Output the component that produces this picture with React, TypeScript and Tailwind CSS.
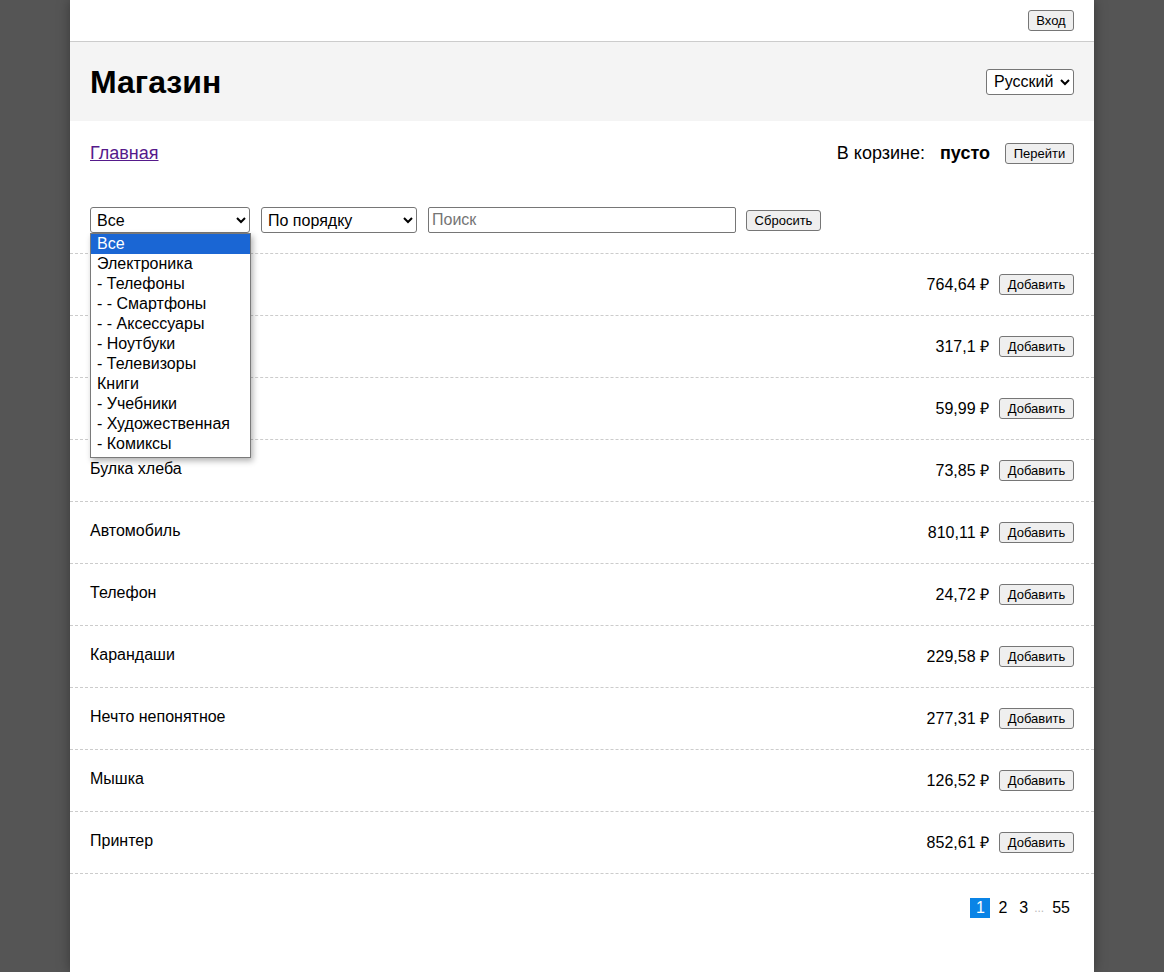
import React from "react";

const products: [string, string][] = [
  ["", "764,64 ₽"],
  ["", "317,1 ₽"],
  ["", "59,99 ₽"],
  ["Булка хлеба", "73,85 ₽"],
  ["Автомобиль", "810,11 ₽"],
  ["Телефон", "24,72 ₽"],
  ["Карандаши", "229,58 ₽"],
  ["Нечто непонятное", "277,31 ₽"],
  ["Мышка", "126,52 ₽"],
  ["Принтер", "852,61 ₽"],
];

const categories = [
  "Все",
  "Электроника",
  "- Телефоны",
  "- - Смартфоны",
  "- - Аксессуары",
  "- Ноутбуки",
  "- Телевизоры",
  "Книги",
  "- Учебники",
  "- Художественная",
  "- Комиксы",
];

function Btn({ children, className = "" }: { children: React.ReactNode; className?: string }) {
  return (
    <button
      className={
        "h-[21px] rounded-[3px] border border-[#767676] bg-[#efefef] px-[6px] text-[13px] leading-[19px] text-black " +
        className
      }
    >
      {children}
    </button>
  );
}

export default function App() {
  return (
    <div className="min-h-[972px] bg-[#555555] font-['Liberation_Sans',Arial,sans-serif] text-black">
      <div className="mx-auto min-h-[972px] w-[1024px] bg-white shadow-[0_0_12px_rgba(0,0,0,0.35)]">
        {/* top bar */}
        <div className="flex h-[42px] items-center justify-end border-b border-[#cccccc] px-5 pb-[1px]">
          <Btn className="w-[46px] px-0">Вход</Btn>
        </div>
        {/* header */}
        <div className="flex h-[79px] items-center justify-between bg-[#f4f4f4] px-5">
          <h1 className="text-[32px] font-bold leading-none">Магазин</h1>
          <select className="h-[26px] w-[88px] rounded-[3px] border border-[#767676] bg-white px-[3px] text-[16px]">
            <option>Русский</option>
          </select>
        </div>
        {/* content */}
        <div className="px-5 pt-[22px]">
          <div className="flex h-[21px] items-center justify-between">
            <a href="#" className="text-[18px] text-[#551a8b] underline">
              Главная
            </a>
            <div className="flex items-center">
              <span className="text-[18px]">В корзине:</span>
              <span className="ml-[15px] text-[18px] font-bold">пусто</span>
              <Btn className="ml-[15px] w-[69px] px-0">Перейти</Btn>
            </div>
          </div>

          <div className="relative mt-[43px] flex h-[26px] items-center">
            <select className="h-[26px] w-[160px] rounded-[3px] border border-[#767676] bg-white pl-[2px] text-[16px]">
              <option>Все</option>
            </select>
            <select className="ml-[11px] h-[26px] w-[156px] rounded-[3px] border border-[#767676] bg-white pl-[2px] text-[16px]">
              <option>По порядку</option>
            </select>
            <input
              placeholder="Поиск"
              className="ml-[11px] h-[26px] w-[308px] rounded-[2px] border border-[#767676] px-[3px] text-[16px] placeholder:text-[#757575]"
            />
            <Btn className="ml-[10px] w-[75px] px-0">Сбросить</Btn>

            {/* open dropdown */}
            <div className="absolute left-0 top-[26px] z-10 w-[161px] border border-[#7a7a7a] bg-white pb-[3px] shadow-[2px_3px_6px_rgba(0,0,0,0.3)]">
              {categories.map((c, i) => (
                <div
                  key={c}
                  className={
                    "h-[20px] whitespace-pre pl-[6px] text-[16px] leading-[20px] " +
                    (i === 0 ? "bg-[#1a66d4] text-white" : "text-black")
                  }
                >
                  {c}
                </div>
              ))}
            </div>
          </div>
        </div>

        <div className="mt-[20px] border-t border-dashed border-[#cccccc]">
          {products.map(([name, price], i) => (
            <div
              key={i}
              className="flex h-[62px] items-center justify-between border-b border-dashed border-[#cccccc] px-5"
            >
              <span className="pb-[3px] text-[16px]">{name}</span>
              <div className="flex items-center">
                <span className="text-[16px]">{price}</span>
                <Btn className="ml-[10px] w-[75px] px-0">Добавить</Btn>
              </div>
            </div>
          ))}
        </div>

        <div className="mt-[24px] flex items-center justify-end pr-[24px] text-[16px]">
          <span className="w-[20px] bg-[#0a84e6] text-center leading-[20px] text-white">1</span>
          <span className="ml-[8px] leading-[20px]">2</span>
          <span className="ml-[12px] leading-[20px]">3</span>
          <span className="ml-[4px] w-[14px] text-center text-[12px] leading-[20px] text-[#bbbbbb]">...</span>
          <span className="ml-[6px] leading-[20px]">55</span>
        </div>
      </div>
    </div>
  );
}
